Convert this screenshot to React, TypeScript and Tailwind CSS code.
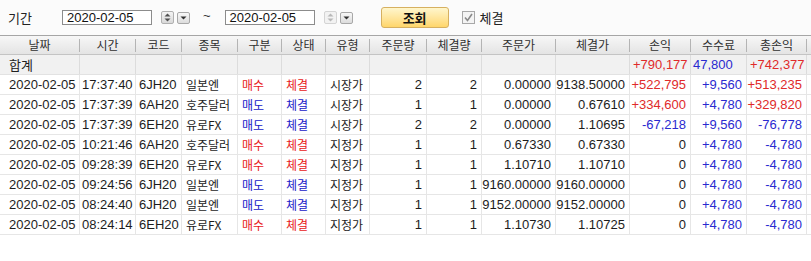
import { memo } from 'react'

const NUM = "font-['Liberation_Sans','Noto_Sans_CJK_KR',sans-serif] text-[13px]"
const KR = "font-['Noto_Sans_CJK_KR','Liberation_Sans',sans-serif] text-[12px]"

const cols = [
  { name: '날짜', w: 'w-[80px]', kind: 'num', pl: 'pl-[9px]' },
  { name: '시간', w: 'w-[56px]', kind: 'num', pl: 'pl-[2px]' },
  { name: '코드', w: 'w-[46px]', kind: 'num', pl: 'pl-[3px]' },
  { name: '종목', w: 'w-[56px]', kind: 'kr', pl: 'pl-[4px]' },
  { name: '구분', w: 'w-[44px]', kind: 'kr', pl: 'pl-[4px]' },
  { name: '상태', w: 'w-[44px]', kind: 'kr', pl: 'pl-[4px]' },
  { name: '유형', w: 'w-[44px]', kind: 'kr', pl: 'pl-[4px]' },
  { name: '주문량', w: 'w-[57px]', kind: 'right' },
  { name: '체결량', w: 'w-[55px]', kind: 'right' },
  { name: '주문가', w: 'w-[74px]', kind: 'right' },
  { name: '체결가', w: 'w-[74px]', kind: 'right' },
  { name: '손익', w: 'w-[61px]', kind: 'right' },
  { name: '수수료', w: 'w-[56px]', kind: 'right' },
  { name: '총손익', w: 'w-[60px]', kind: 'right' },
]

const rows = [
  ['2020-02-05', '17:37:40', '6JH20', '일본엔', '매수', '체결', '시장가', '2', '2', '0.00000', '9138.50000', '+522,795', '+9,560', '+513,235'],
  ['2020-02-05', '17:37:39', '6AH20', '호주달러', '매도', '체결', '시장가', '1', '1', '0.00000', '0.67610', '+334,600', '+4,780', '+329,820'],
  ['2020-02-05', '17:37:39', '6EH20', '유로FX', '매도', '체결', '시장가', '2', '2', '0.00000', '1.10695', '-67,218', '+9,560', '-76,778'],
  ['2020-02-05', '10:21:46', '6AH20', '호주달러', '매수', '체결', '지정가', '1', '1', '0.67330', '0.67330', '0', '+4,780', '-4,780'],
  ['2020-02-05', '09:28:39', '6EH20', '유로FX', '매수', '체결', '지정가', '1', '1', '1.10710', '1.10710', '0', '+4,780', '-4,780'],
  ['2020-02-05', '09:24:56', '6JH20', '일본엔', '매도', '체결', '지정가', '1', '1', '9160.00000', '9160.00000', '0', '+4,780', '-4,780'],
  ['2020-02-05', '08:24:40', '6JH20', '일본엔', '매도', '체결', '지정가', '1', '1', '9152.00000', '9152.00000', '0', '+4,780', '-4,780'],
  ['2020-02-05', '08:24:14', '6EH20', '유로FX', '매수', '체결', '지정가', '1', '1', '1.10730', '1.10725', '0', '+4,780', '-4,780'],
]

function cellColor(ci: number, v: string, side: string) {
  if (ci === 4 || ci === 5) return side === '매수' ? 'text-[#e81818]' : 'text-[#2020c8]'
  if (ci === 12) return 'text-[#2a2ad0]'
  if (ci === 11 || ci === 13) {
    if (v.startsWith('+')) return 'text-[#e02a2a]'
    if (v.startsWith('-')) return 'text-[#2a2ad0]'
  }
  return 'text-[#1c1c1c]'
}

function Spinner({ off }: { off?: boolean }) {
  const c = off ? '#b8b8b8' : '#505050'
  return (
    <div className="flex items-center gap-[3px]">
      <div className={`w-[13px] h-[13px] rounded-[2px] border flex items-center justify-center ${off ? 'border-[#d4d4d4] bg-[#f2f2f2]' : 'border-[#b0b0b0] bg-gradient-to-b from-[#f4f4f4] to-[#d8d8d8]'}`}>
        <svg width="7" height="9" viewBox="0 0 7 9">
          <path d="M3.5 0.5 L6.5 3.5 H0.5 Z" fill={c} />
          <path d="M3.5 8.5 L6.5 5.5 H0.5 Z" fill={c} />
        </svg>
      </div>
      <div className="w-[13px] h-[12px] rounded-[2px] border border-[#a8a8a8] bg-gradient-to-b from-[#f8f8f8] to-[#dcdcdc] flex items-center justify-center">
        <svg width="7" height="4" viewBox="0 0 7 4">
          <path d="M0.5 0.5 H6.5 L3.5 3.5 Z" fill="#303030" />
        </svg>
      </div>
    </div>
  )
}

function DateBox({ off }: { off?: boolean }) {
  return (
    <div className="flex items-center w-[128px] h-[15px]">
      <div className={`flex items-center h-[15px] w-[90px] border border-[#8c8c8c] bg-white pl-[4px] ${NUM} text-[#111]`}>
        2020-02-05
      </div>
      <div className="flex-1" />
      <Spinner off={off} />
    </div>
  )
}

const TopBar = memo(function TopBar() {
  return (
    <div className="h-[35px] flex items-center bg-[#fbfbfb] pl-[8px]">
      <span className={`${KR} text-[13px] text-[#222] w-[54px]`}>기간</span>
      <DateBox />
      <span className={`${NUM} text-[#333] ml-[13px] mr-[14px] -mt-[3px]`}>~</span>
      <DateBox off />
      <button className={`ml-[28px] w-[68px] h-[21px] rounded-[3px] border border-[#d6b060] bg-gradient-to-b from-[#fff6cc] to-[#ffd66a] ${KR} text-[13px] font-bold text-[#111] flex items-center justify-center`}>
        조회
      </button>
      <div className="ml-[13px] w-[13px] h-[13px] border border-[#a8a8a8] bg-[#f4f4f4] flex items-center justify-center">
        <svg width="9" height="9" viewBox="0 0 9 9">
          <path d="M1 4.5 L3.5 7.5 L8 1" fill="none" stroke="#8a8a8a" strokeWidth="1.6" />
        </svg>
      </div>
      <span className={`${KR} text-[13px] text-[#222] ml-[5px]`}>체결</span>
    </div>
  )
})

export default function App() {
  return (
    <div className="w-[811px] h-[261px] bg-white overflow-hidden">
      <TopBar />
      <div className="flex h-[20px] border-t border-[#a6a6a6] border-b border-b-[#c4c4c4] bg-gradient-to-b from-[#f7f7f7] to-[#e4e4e4]">
        {cols.map((c) => (
          <div key={c.name} className={`${c.w} flex items-center h-full`}>
            <span className={`flex-1 text-center ${KR} text-[#303030]`}>{c.name}</span>
            <span className="w-px h-[13px] bg-[#b4b4b4]" />
          </div>
        ))}
      </div>
      <div className="flex h-[20px] border-b border-[#e2e2e2] bg-[#f1f1f1]">
        {cols.map((c, i) => (
          <div key={c.name} className={`${c.w} h-full border-r border-[#dcdcdc] flex items-center overflow-hidden`}>
            {i === 0 && <span className={`${KR} text-[13px] text-[#202020] pl-[9px]`}>합계</span>}
            {i === 11 && <span className={`${NUM} text-[#e02a2a] pl-[3px]`}>+790,177</span>}
            {i === 12 && <span className={`${NUM} text-[#2a2ad0] pl-[2px]`}>47,800</span>}
            {i === 13 && <span className={`${NUM} text-[#e02a2a] pl-[3px]`}>+742,377</span>}
          </div>
        ))}
      </div>
      {rows.map((r, ri) => (
        <div key={ri} className="flex h-[20px] border-b border-[#e6e6e6] bg-white">
          {cols.map((c, ci) => {
            const v = r[ci]
            const isKr = c.kind === 'kr'
            const right = c.kind === 'right'
            return (
              <div
                key={c.name}
                className={`${c.w} h-full border-r border-[#e6e6e6] flex items-center overflow-hidden whitespace-nowrap ${right ? 'justify-end pr-[4px]' : c.pl} ${isKr ? KR : NUM} ${cellColor(ci, v, r[4])}`}
              >
                {v}
              </div>
            )
          })}
        </div>
      ))}
    </div>
  )
}
